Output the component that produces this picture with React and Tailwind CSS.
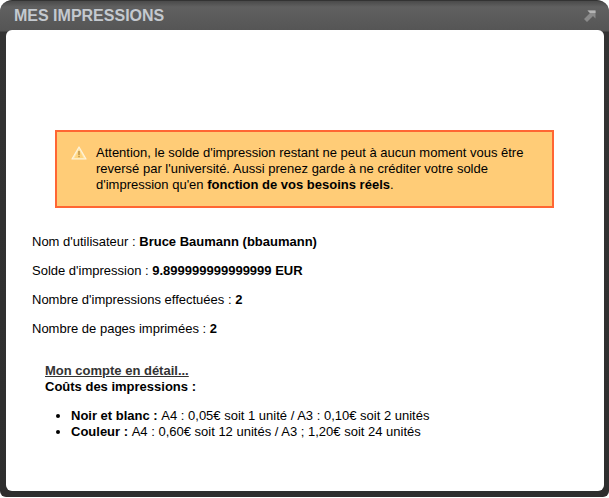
import React from "react";

const stats = [
  { label: "Nom d'utilisateur : ", value: "Bruce Baumann (bbaumann)" },
  { label: "Solde d'impression : ", value: "9.899999999999999 EUR" },
  { label: "Nombre d'impressions effectuées : ", value: "2" },
  { label: "Nombre de pages imprimées : ", value: "2" },
];

function WarningIcon() {
  return (
    <svg width="16" height="14" viewBox="0 0 16 14" className="shrink-0 mt-[1px]">
      <path d="M8 1 L15 13 L1 13 Z" fill="#ffe6a8" stroke="#fdf3dc" strokeWidth="1.2" strokeLinejoin="round" />
      <path d="M8 3.5 L12.6 12 L3.4 12 Z" fill="#ffd47e" />
      <rect x="7.3" y="5" width="1.4" height="4" fill="#b8914a" />
      <rect x="7.3" y="9.8" width="1.4" height="1.4" fill="#b8914a" />
    </svg>
  );
}

function ExpandIcon() {
  return (
    <svg width="12" height="12" viewBox="0 0 12 12">
      <path d="M3.5 0.5 H11.5 V8.5 L9 6 L3 12 L0 9 L6 3 Z" fill="#8a8a8a" />
      <path d="M3.5 0.5 H11.5 V3 H6 Z" fill="#b4b4b4" />
    </svg>
  );
}

export default function App() {
  return (
    <div className="w-[609px] h-[498px] bg-white font-['Liberation_Sans',Arial,sans-serif]">
      <div className="w-[609px] h-[497px] flex flex-col rounded-t-[12px] rounded-b-[6px] bg-[linear-gradient(#4a4a4a_0px,#606060_6px,#555555_30px,#333333_31px,#2e2e2e_100%)] border-t border-[#333333] pl-[6px] pr-[5px] pb-[6px]">
        {/* Title bar */}
        <div className="h-[29px] shrink-0 flex items-center justify-between pl-[8px] pr-[8px]">
          <h1 className="text-[16px] font-bold text-[#c4c9cf] leading-none">MES IMPRESSIONS</h1>
          <ExpandIcon />
        </div>

        {/* Panel */}
        <div className="flex-1 bg-white rounded-[6px] text-[13px] leading-[16px] text-black">
          <div className="mt-[100px] ml-[49px] w-[499px] h-[78px] flex items-start gap-[9px] border-2 border-[#ff6633] bg-[#ffcc77] pl-[14px] pt-[13px]">
            <WarningIcon />
            <p className="w-[440px]">
              Attention, le solde d'impression restant ne peut à aucun moment vous être reversé par l'université. Aussi prenez garde à ne créditer votre solde d'impression qu'en <b>fonction de vos besoins réels</b>.
            </p>
          </div>

          <div className="mt-[26px] ml-[26px] flex flex-col gap-[13px]">
            {stats.map((s) => (
              <p key={s.label}>
                {s.label}
                <b>{s.value}</b>
              </p>
            ))}
          </div>

          <div className="mt-[26px] ml-[39px]">
            <a className="block font-bold underline text-[#333333]">Mon compte en détail...</a>
            <p className="font-bold">Coûts des impressions :</p>
            <ul className="list-disc mt-[13px] ml-[26px]">
              <li><b>Noir et blanc : </b>A4 : 0,05€ soit 1 unité / A3 : 0,10€ soit 2 unités</li>
              <li><b>Couleur : </b>A4 : 0,60€ soit 12 unités / A3 ; 1,20€ soit 24 unités</li>
            </ul>
          </div>
        </div>
      </div>
    </div>
  );
}
